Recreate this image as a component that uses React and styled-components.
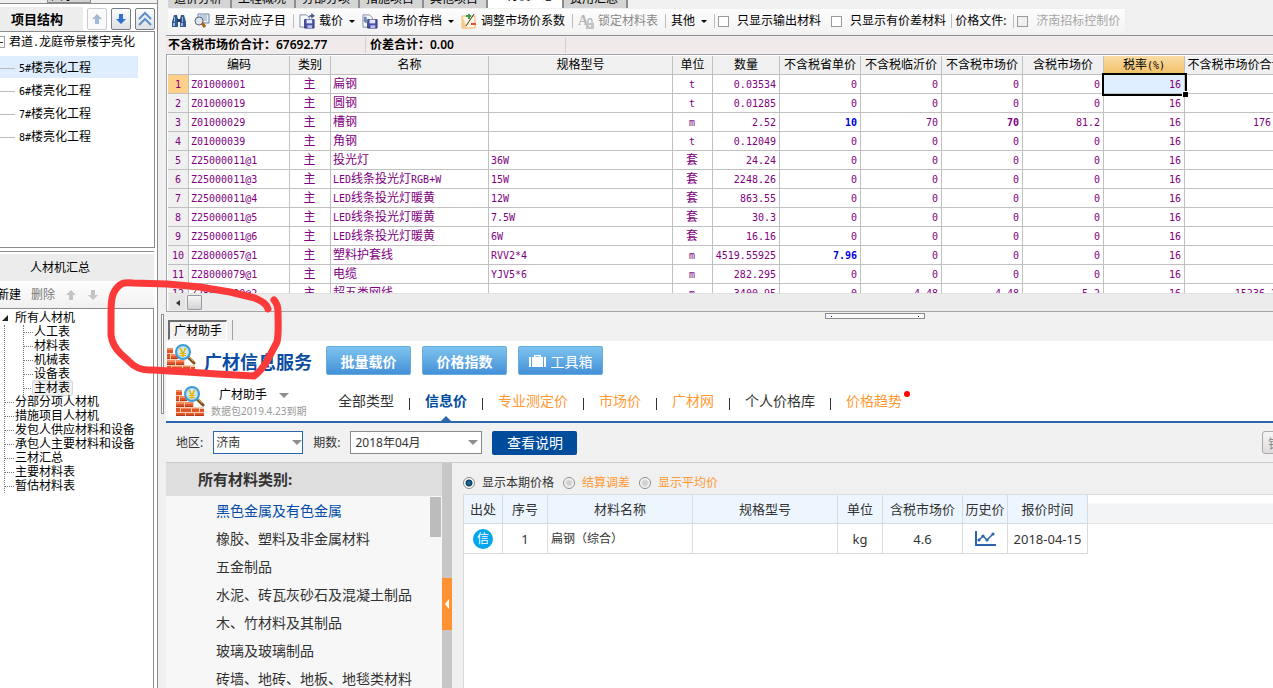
import React, { useState } from "react";
import styled, { createGlobalStyle, css } from "styled-components";

const GlobalStyle = createGlobalStyle`
  * {
    box-sizing: border-box;
  }
  html, body, #root {
    height: 100%;
  }
  body {
    margin: 0;
    overflow: hidden;
    background: #f0f0f0;
    color: #000;
    font-family: "Noto Sans", "Noto Sans CJK SC", sans-serif;
    font-size: 12px;
    line-height: 16px;
  }
  button, input, select {
    font-family: inherit;
    margin: 0;
  }
  ul {
    list-style: none;
    margin: 0;
    padding: 0;
  }
`;

const Page = styled.div`
  position: relative;
  display: flex;
  height: 100vh;
  overflow: hidden;
`;

/* half-width text inside the grid and the trees */
const Half = styled.span`
  font-family: "DejaVu Sans Mono", monospace;
  font-size: 10px;
  line-height: 10px;
`;

const Mixed = ({ text }) =>
  String(text)
    .split(/([\x20-\x7e]+)/)
    .filter(Boolean)
    .map((part, i) => (/^[\x20-\x7e]/.test(part) ? <Half key={i}>{part}</Half> : part));

/* ---------- left side ---------- */

const Sidebar = styled.aside`
  flex: none;
  width: 158px;
  display: flex;
  flex-direction: column;
  background: #fff;
  border-right: 1px solid #8c8c8c;
`;

const SideStrip = styled.div`
  flex: none;
  height: 4px;
  overflow: hidden;
  background: #f0f0f0;
  border-bottom: 1px solid #8c8c8c;
  padding-left: 47px;
`;

const SideTab = styled.div`
  width: 44px;
  height: 16px;
  margin-top: -13px;
  padding-left: 3px;
  background: #d2d2d2;
  border: 1px solid #8c8c8c;
  line-height: 16px;
`;

const StructureHead = styled.div`
  flex: none;
  display: flex;
  align-items: center;
  gap: 4px;
  height: 24px;
  margin-top: 3px;
  padding-right: 2px;
`;

const StructureTitle = styled.h2`
  flex: 1;
  margin: 0;
  padding-left: 11px;
  background: #ededed;
  font-size: 13px;
  line-height: 24px;
  font-weight: 700;
`;

const SquareButton = styled.button`
  display: flex;
  align-items: center;
  justify-content: center;
  width: 20px;
  height: 22px;
  padding: 0;
  border: 1px solid ${props => (props.$dim ? "#c9cdd2" : "#777d85")};
  border-radius: 2px;
  background: ${props => (props.$dim ? "#fafafa" : "linear-gradient(#fdfdfd, #dcdfe4)")};
`;

const ProjectTree = styled.ul`
  flex: none;
  height: 217px;
  margin-right: 2px;
  border: 1px solid #8c8c8c;
  border-left: 0;
`;

const ProjectRoot = styled.li`
  display: flex;
  align-items: center;
  gap: 4px;
  height: 20px;
  margin-bottom: 4px;
  white-space: nowrap;
`;

const Expander = styled.span`
  width: 5px;
  height: 12px;
  border: 1px solid #a0a0a0;
  border-left: 0;
  display: flex;
  align-items: center;

  &::before {
    content: "";
    width: 3px;
    height: 1px;
    background: #333;
  }
`;

const ProjectNode = styled.li`
  display: flex;
  align-items: center;
  gap: 4px;
  height: 22px;
  margin: 0 16px 1px 0;
  padding-top: 2px;
  background: ${props => (props.$active ? "#dfeeff" : "transparent")};

  &::before {
    content: "";
    width: 15px;
    height: 1px;
    background: #bbb;
  }
`;

const SummaryPane = styled.section`
  flex: 1;
  display: flex;
  flex-direction: column;
  min-height: 0;
  margin-top: 3px;
  margin-right: 3px;
  border-top: 1px solid #8c8c8c;
`;

const SummaryTitle = styled.h2`
  flex: none;
  margin: 2px 0 0;
  padding-left: 30px;
  background: #ececec;
  font-size: 12px;
  font-weight: 400;
  line-height: 27px;
`;

const SummaryTools = styled.div`
  flex: none;
  display: flex;
  align-items: center;
  gap: 10px;
  height: 27px;
  margin-left: -3px;
  background: linear-gradient(#fff, #f0f0f0);
`;

const PlainButton = styled.button`
  display: flex;
  padding: 0;
  border: 0;
  background: none;
  font-size: 12px;
  line-height: 16px;
  color: ${props => (props.disabled ? "#777" : "#000")};
`;

const MaterialTree = styled.div`
  flex: 1;
  overflow: hidden;
  padding: 2px 0 0 4px;
  border: 1px solid #8c8c8c;
  border-left: 0;
  border-bottom: 0;
  line-height: 14px;
  white-space: nowrap;
`;

const TreeRoot = styled.div`
  display: flex;
  align-items: center;
  gap: 7px;
  margin-left: -2px;
  height: 14px;
`;

const Branch = styled.ul`
  border-left: 1px dotted #777;
  ${props => props.$nested && css`
    margin-left: 18px;
  `}
`;

const Leaf = styled.li`
  display: flex;
  align-items: center;
  height: 14px;

  &::before {
    content: "";
    width: 9px;
    border-top: 1px dotted #777;
  }
`;

const LeafText = styled.span`
  padding: 0 2px 0 1px;
  border-radius: 2px;
  ${props => props.$active && css`
    background: #efefef;
    box-shadow: 0 0 0 1px #d9d9d9;
  `}
`;

const VerticalSplit = styled.div`
  flex: none;
  width: 8px;
  padding: 314px 2px 0 3px;
  background: #f0f0f0;
`;

const VerticalGrip = styled.div`
  height: 100px;
  border: 1px solid #8c8c8c;
  background: #fff;
`;

/* ---------- upper right: price grid ---------- */

const Main = styled.main`
  flex: 1;
  min-width: 0;
  display: flex;
  flex-direction: column;
`;

const TabStrip = styled.div`
  flex: none;
  display: flex;
  align-items: flex-end;
  height: 8px;
  overflow: hidden;
  padding-left: 2px;
`;

const Tab = styled.button`
  flex: none;
  height: 22px;
  padding: ${props => (props.$active ? "0 8px 2px 6px" : "4px 8px 0 6px")};
  border: 0;
  border-right: 2px solid #8c8c8c;
  background: ${props => (props.$active ? "#fff" : "#d4d4d4")};
  font-size: 12px;
  line-height: 16px;
`;

const Toolbar = styled.div`
  flex: none;
  height: 28px;
  padding: 1px 0 0 2px;
  border-bottom: 1px solid #8c8c8c;
`;

const ToolGroup = styled.div`
  display: flex;
  align-items: center;
  gap: 1px;
  height: 24px;
  width: max-content;
  padding-right: 4px;
  background: linear-gradient(#fdfdfd, #f3f3f3);
  white-space: nowrap;
`;

const ToolButton = styled.button`
  display: flex;
  align-items: center;
  gap: 4px;
  padding: 0 3px;
  border: 0;
  background: none;
  font-size: 12px;
  line-height: 16px;
  color: ${props => (props.disabled ? "#888" : "#000")};
`;

const Caret = styled.span`
  margin-left: 2px;
  border: 3px solid transparent;
  border-top-color: #000;
  border-bottom: 0;
`;

const ToolSep = styled.span`
  width: 1px;
  height: 14px;
  margin: 0 1px 0 3px;
  background: #bdbdbd;
`;

const ToolText = styled.span`
  padding: 0 3px 0 1px;
`;

const CheckLabel = styled.label`
  display: flex;
  align-items: center;
  gap: 8px;
  padding: 0 1px;
  color: ${props => (props.$dim ? "#a5a5a5" : "#000")};

  & + & {
    margin-left: 7px;
  }
`;

const CheckBox = styled.input`
  appearance: none;
  width: 11px;
  height: 11px;
  border: 1px solid #9a9a9a;
  background: ${props => (props.disabled ? "#f0f0f0" : "#fff")};

  &:checked {
    background: #6b8fc4;
  }
`;

const Totals = styled.div`
  flex: none;
  display: flex;
  height: 18px;
  padding: 1px 0;
  font-weight: 600;
`;

const Total = styled.div`
  width: 200px;
  padding-left: 4px;
  background: #f0ebea;
  border-right: 1px solid #d5d0cf;

  &:first-child {
    padding-left: 2px;
  }

  &:last-child {
    flex: 1;
    border: 0;
  }
`;

const GridFrame = styled.div`
  flex: none;
  padding: 1px 0 0 1px;
  border: 1px solid #a3a3a8;
  border-right: 0;
  background: #fff;
`;

const GridView = styled.div`
  height: 237px;
  overflow: hidden;
`;

const Sheet = styled.table`
  width: 1119px;
  table-layout: fixed;
  border-collapse: separate;
  border-spacing: 0;
  color: #800080;
`;

const HeadCell = styled.th`
  height: 19px;
  padding: 0;
  border-right: 1px solid #c0c0c0;
  border-bottom: 1px solid #c0c0c0;
  background: ${props => (props.$active ? "linear-gradient(#fbdca6, #f2bf66)" : "#f0f0f0")};
  color: #000;
  font-weight: 400;
  line-height: 16px;
  white-space: nowrap;
`;

const Cell = styled.td`
  height: 19px;
  padding: 0 3px 0 2px;
  border-right: 1px solid #c0c0c0;
  border-bottom: 1px solid #c0c0c0;
  line-height: 16px;
  text-align: ${props => props.$align || "left"};
  white-space: nowrap;
  color: ${props => (props.$edited ? "#0000e0" : "inherit")};
  font-weight: ${props => (props.$edited || props.$strong ? 700 : 400)};
  ${props => props.$selected && css`
    position: relative;
    background: #e0efff;
    outline: 2px solid #000;

    &::after {
      content: "";
      position: absolute;
      right: -4px;
      bottom: -4px;
      width: 5px;
      height: 5px;
      background: #000;
      border: 1px solid #fff;
      border-width: 1px 0 0 1px;
    }
  `}
`;

const RowHead = styled(Cell).attrs({ as: "th", scope: "row" })`
  padding: 0;
  text-align: center;
  background: ${props => (props.$active ? "#ffd08a" : "#f0f0f0")};
`;

const ScrollRow = styled.div`
  display: flex;
  gap: 2px;
  height: 18px;
  padding: 1px 2px;
  background: #ececec;
  border-top: 1px solid #e0e0e0;
`;

const ScrollArrow = styled.button`
  width: 15px;
  height: 15px;
  padding: 0;
  border: 0;
  background: #e4e4e4;
  display: flex;
  align-items: center;
  justify-content: center;

  &::before {
    content: "";
    border: 3px solid transparent;
    border-right: 4px solid #333;
    border-left: 0;
  }
`;

const ScrollThumb = styled.div`
  width: 15px;
  height: 15px;
  border: 1px solid #999;
  border-radius: 1px;
  background: linear-gradient(#f6f6f6, #d2d2d6);
`;

const SplitBar = styled.div`
  flex: none;
  height: 8px;
  padding: 1px 0 0 659px;
`;

const SplitGrip = styled.div`
  display: flex;
  align-items: center;
  justify-content: space-between;
  width: 100px;
  height: 6px;
  padding: 0 5px;
  border: 1px solid #8c8c8c;
  background: #fafafa;

  &::before,
  &::after {
    content: "";
    width: 1px;
    height: 1px;
    background: #00008b;
  }
`;

const DockTabs = styled.div`
  flex: none;
  display: flex;
  gap: 5px;
  height: 21px;
  padding: 0 0 1px 2px;
`;

const DockTab = styled.button`
  padding: 0 4px;
  border: 1px solid #fff;
  border-top: 2px solid #6d6d6d;
  border-left: 2px solid #6d6d6d;
  background: #f4f4f4;
  font-size: 12px;
  line-height: 16px;
`;

const DockSep = styled.span`
  width: 1px;
  background: #a0a0a0;
`;

/* ---------- lower right: price service ---------- */

const Service = styled.section`
  flex: 1;
  min-height: 0;
  display: flex;
  flex-direction: column;
  background: #fff;
  color: #333;
`;

const BrandRow = styled.header`
  flex: none;
  display: flex;
  align-items: flex-start;
  height: 38px;
  padding-top: 3px;
`;

const BrandName = styled.h1`
  margin: 6px 14px 0 8px;
  font-size: 18px;
  line-height: 24px;
  font-weight: 700;
  color: #0b4da2;
`;

const BlueButton = styled.button`
  display: flex;
  align-items: center;
  justify-content: center;
  gap: 5px;
  width: 85px;
  height: 29px;
  margin: 2px 11px 0 0;
  padding: 0;
  border: 1px solid #62aee0;
  border-radius: 2px;
  background: linear-gradient(#7ec3ee, #4590d8);
  color: #fff;
  font-size: 14px;
  font-weight: ${props => (props.$light ? 400 : 600)};
`;

const NavRow = styled.div`
  flex: none;
  display: flex;
  height: 44px;
  padding-left: 9px;
  border-bottom: 2px solid #2a66ab;
`;

const Account = styled.div`
  flex: none;
  display: flex;
  gap: 6px;
  width: 148px;
  padding-top: 7px;
  white-space: nowrap;
`;

const AccountName = styled.div`
  display: flex;
  align-items: center;
  gap: 12px;
  padding-left: 8px;
  line-height: 18px;
  color: #000;
`;

const AccountNote = styled.div`
  font-size: 10px;
  line-height: 14px;
  color: #999;
`;

const GreyCaret = styled.span`
  border: 5px solid transparent;
  border-top-color: #8e8e8e;
  border-bottom: 0;
`;

const Nav = styled.nav`
  display: flex;
  padding: 6px 0 0 15px;
  white-space: nowrap;
`;

const NavItem = styled.a`
  position: relative;
  display: flex;
  font-size: 14px;
  line-height: 32px;
  text-decoration: none;
  color: ${props => (props.$active ? "#004c9c" : props.$accent ? "#ff9933" : "#333")};
  font-weight: ${props => (props.$active ? 700 : 400)};

  &:not(:first-child)::before {
    content: "";
    width: 1px;
    height: 12px;
    margin: 13px 15px 0;
    background: #333;
  }
`;

const NavPointer = styled.span`
  position: absolute;
  right: 16px;
  bottom: 0;
  border: 5px solid transparent;
  border-bottom-color: #2a66ab;
  border-top: 0;
`;

const NavDot = styled.span`
  position: absolute;
  right: -8px;
  top: 6px;
  width: 6px;
  height: 6px;
  border-radius: 50%;
  background: #f00;
`;

const FilterRow = styled.div`
  flex: none;
  display: flex;
  align-items: center;
  height: 40px;
  padding-left: 10px;
  overflow: hidden;
  background: #f1f1f1;
  border-bottom: 1px solid #ccc;
`;

const Field = styled.label`
  display: flex;
  align-items: center;
  gap: 10px;
  margin-right: 10px;
  font-size: 12px;
`;

const SelectBox = styled.span`
  position: relative;
  display: flex;
  width: ${props => (props.$wide ? "132px" : "90px")};

  ${GreyCaret} {
    position: absolute;
    top: 9px;
    right: ${props => (props.$wide ? "4px" : "1px")};
    pointer-events: none;
  }
`;

const Select = styled.select`
  appearance: none;
  width: 100%;
  height: 23px;
  padding: 0 4px 0 ${props => (props.$wide ? "4px" : "2px")};
  border: 1px solid ${props => (props.$wide ? "#8a8a8a" : "#2a66ab")};
  border-radius: 0;
  background: #fff;
  font-size: 12px;
  color: #333;
`;

const ExplainButton = styled.button`
  width: 85px;
  height: 24px;
  padding: 0;
  border: 0;
  border-radius: 2px;
  background: #004c9c;
  color: #fff;
  font-size: 14px;
  line-height: 24px;
`;

const ReportButton = styled.button`
  flex: none;
  width: 64px;
  height: 23px;
  margin: 0 -53px 0 auto;
  padding: 0 4px;
  border: 1px solid #aaa;
  border-radius: 3px;
  background: linear-gradient(#f5f5f5, #ddd);
  color: #888;
  font-size: 13px;
`;

const Body = styled.div`
  flex: 1;
  min-height: 0;
  display: flex;
`;

const Categories = styled.aside`
  flex: none;
  width: 276px;
  display: flex;
  flex-direction: column;
  background: #f7f7f7;
`;

const CategoryTitle = styled.h2`
  flex: none;
  margin: 0;
  padding-left: 32px;
  background: #dedede;
  font-size: 15px;
  line-height: 33px;
  font-weight: 700;
`;

const CategoryScroll = styled.div`
  flex: 1;
  min-height: 0;
  display: flex;
  justify-content: space-between;
  overflow: hidden;
  padding: 1px 1px 0 50px;
`;

const CategoryLink = styled.a`
  display: block;
  font-size: 14px;
  line-height: 28px;
  text-decoration: none;
  color: ${props => (props.$active ? "#004ca8" : "#333")};
`;

const CategoryThumb = styled.div`
  width: 11px;
  height: 40px;
  background: #bcbcbc;
`;

const Divider = styled.div`
  flex: none;
  width: 10px;
  padding-top: 115px;
  background: #c8c7c5;
`;

const FoldButton = styled.button`
  display: flex;
  align-items: center;
  justify-content: center;
  width: 10px;
  height: 52px;
  padding: 0;
  border: 0;
  background: #ff9233;

  &::before {
    content: "";
    border: 5px solid transparent;
    border-right: 4px solid #fff;
    border-left: 0;
  }
`;

const Prices = styled.div`
  flex: 1;
  min-width: 0;
  display: flex;
  flex-direction: column;
  padding-left: 11px;
  background: #f0f0f0;
`;

const RadioRow = styled.div`
  flex: none;
  display: flex;
  align-items: center;
  gap: 9px;
  height: 31px;
  padding-top: 8px;
`;

const RadioLabel = styled.label`
  display: flex;
  align-items: center;
  gap: 7px;
  color: ${props => (props.$accent ? "#ff9933" : "#333")};
`;

const Radio = styled.input`
  appearance: none;
  width: 12px;
  height: 12px;
  border: 1px solid #8a8a8a;
  border-radius: 50%;
  background: radial-gradient(circle, #cfcfcf 0, #cfcfcf 2px, #fff 5px);

  &:checked {
    background: radial-gradient(circle, #1a7fb5 0, #0b3a5c 3px, #fff 4px);
  }
`;

const PriceView = styled.div`
  flex: 1;
  display: flex;
  align-items: flex-start;
  border-left: 1px solid #d8dcdf;
  background: #fff;
`;

const HeadFill = styled.div`
  flex: 1;
  height: 30px;
  border-top: 1px solid #d8dcdf;
  border-bottom: 1px solid #e3e3e3;
  background: linear-gradient(#fff 8px, #f3f4f5 9px);
`;

const PriceTable = styled.table`
  width: 624px;
  flex: none;
  table-layout: fixed;
  border-collapse: separate;
  border-spacing: 0;
  border-top: 1px solid #d8dcdf;
  font-size: 13px;

  th,
  td {
    height: 30px;
    padding: 0;
    border-right: 1px solid #d8dcdf;
    border-bottom: 1px solid #d8dcdf;
    text-align: center;
    white-space: nowrap;
  }

  th {
    height: 29px;
    background: #edf6ff;
    font-weight: 400;
  }

  svg {
    display: block;
    margin: 0 auto;
  }
`;

const NameCell = styled.td`
  && {
    padding-left: 3px;
    text-align: left;
    font-size: 12px;
  }
`;

const Source = styled.span`
  display: block;
  width: 20px;
  height: 20px;
  margin: 0 auto;
  border-radius: 50%;
  background: #00a5ef;
  color: #fff;
  font-size: 12px;
  line-height: 19px;
`;

const Marker = styled.svg`
  position: absolute;
  left: 100px;
  top: 275px;
  pointer-events: none;
`;

/* ---------- icons ---------- */

const ArrowIcon = ({ fill, down, size = 12 }) => (
  <svg width={size} height={size} viewBox="0 0 12 12" aria-hidden="true">
    <path
      d={down ? "M4 1h4v5h3L6 11 1 6h3z" : "M4 11h4V6h3L6 1 1 6h3z"}
      fill={fill}
    />
  </svg>
);

const DoubleUpIcon = () => (
  <svg width="16" height="16" viewBox="0 0 16 16" fill="none" aria-hidden="true">
    <path d="M2 8l6-6 6 6M2 14l6-6 6 6" stroke="#5c90cc" strokeWidth="2" />
  </svg>
);

const BinocularsIcon = () => (
  <svg width="16" height="16" viewBox="0 0 16 16" aria-hidden="true">
    <path d="M3 2h3l1 4v8H1V9z" fill="#35588f" />
    <path d="M10 2h3l2 7v5H9V6z" fill="#35588f" />
    <path d="M6 6h4v3H6z" fill="#1f3c6d" />
    <path d="M3 4h1v5H3zM11 4h1v5h-1zM2 10h2v3H2zM10 10h2v3h-2z" fill="#9ab8df" />
  </svg>
);

const LookupIcon = () => (
  <svg width="16" height="16" viewBox="0 0 16 16" aria-hidden="true">
    <path d="M4 1h11v9H4z" fill="#e6eef8" stroke="#6d84a5" />
    <path d="M6 3h7M6 5h7M9 7h4" stroke="#93a9c7" />
    <circle cx="5" cy="8" r="4" fill="#dbe7f0" stroke="#5b6470" />
    <path d="M8 10l3 4" stroke="#a8611f" strokeWidth="3" />
  </svg>
);

const DiskIcon = ({ out }) => (
  <svg width="16" height="16" viewBox="0 0 17 17" aria-hidden="true">
    <path d="M1 2h7l3 3v10H1z" fill="#f5f8fc" stroke="#7d8ba3" />
    <path d="M6 7h10v9H6z" fill="#4a50a8" stroke="#2f3580" />
    <path d="M8 7h6v4H8z" fill="#e4e8f6" />
    <path d="M9 13h5v3H9z" fill="#b9bfe2" />
    {out ? (
      <path d="M2 4h3v4h2L4 11 1 8h1z" fill="#7186b4" />
    ) : (
      <path d="M10 5c0-2 1-3 3-3V0l4 3-4 3V4c-1 0-2 0-3 1z" fill="#4d5d7d" />
    )}
  </svg>
);

const AdjustIcon = () => (
  <svg width="16" height="16" viewBox="0 0 16 16" aria-hidden="true">
    <path d="M1 3h13v12H1z" fill="#fff6e4" stroke="#efb06a" />
    <path d="M1 3v12h5z" fill="#f7c98b" />
    <path d="M5 3h5M8 1v5" stroke="#35a04c" strokeWidth="2" />
    <path d="M13 1L5 13" stroke="#333" />
    <path d="M10 11h5" stroke="#e5522f" strokeWidth="2" />
  </svg>
);

const LockIcon = () => (
  <svg width="16" height="16" viewBox="0 0 16 16" aria-hidden="true">
    <text x="0" y="12" fontSize="14" fontWeight="700" fontFamily="Liberation Serif, serif" fill="#b5b5b5">A</text>
    <path d="M10 10V8c0-3 4-3 4 0v2" fill="none" stroke="#bbb" strokeWidth="1.5" />
    <path d="M8 10h8v6H8z" fill="#c4c4c4" />
    <path d="M11 12h2v2h-2z" fill="#eee" />
  </svg>
);

const CaseIcon = () => (
  <svg width="17" height="14" viewBox="0 0 17 14" fill="#fff" aria-hidden="true">
    <path d="M5 3V1h7v2h-1.500V2.200h-4V3z" />
    <path d="M0 3h2v10H0zM3 3h11v10H3zM15 3h2v10h-2z" />
  </svg>
);

const LogoIcon = () => (
  <svg width="30" height="31" viewBox="0 0 30 31" aria-hidden="true">
    <path d="M1 5h6v5h4v6h8v5h10v9H1z" fill="#f6cdb0" />
    <g fill="#e0552a">
      <path d="M1 4h6v5H1zM1 10h3v5H1zM5 10h7v5H5zM1 16h8v5H1zM10 16h8v5h-8z" />
      <path d="M1 22h4v4H1zM6 22h10v4H6zM17 22h7v4h-7zM1 27h9v3H1zM11 27h8v3h-8zM20 27h9v3h-9zM25 23h4v3h-4z" />
    </g>
    <path d="M1 4h6v2H1zM5 10h7v2H5zM1 16h8v2H1zM10 16h8v2h-8zM6 22h10v1H6zM17 22h7v1h-7z" fill="#f58a5e" />
    <path d="M1 14h3v1H1zM5 14h7v1H5zM1 20h8v1H1zM10 20h8v1h-8zM1 29h9v1H1zM11 29h8v1h-8zM20 29h9v1h-9z" fill="#b23a16" />
    <path d="M22 13l6 6" stroke="#7b5420" strokeWidth="3" strokeLinecap="round" />
    <path d="M23 13l4 4" stroke="#e8a640" strokeLinecap="round" />
    <circle cx="17" cy="8" r="7" fill="#a9dcf5" stroke="#3f9bd4" strokeWidth="2" />
    <circle cx="17" cy="8" r="5" fill="#cfeaf5" />
    <text x="17" y="13" textAnchor="middle" fontSize="13" fontWeight="700" fontFamily="Liberation Sans, sans-serif" fill="#e6b800">¥</text>
  </svg>
);

const TrendIcon = () => (
  <svg width="21" height="16" viewBox="0 0 21 16" fill="none" stroke="#2a66ab" aria-hidden="true">
    <path d="M1 0v14h20" strokeWidth="2" />
    <path d="M4 9l4-4 4 4 6-6" strokeWidth="1.500" />
    <g fill="#2a66ab" stroke="none">
      <circle cx="4" cy="9" r="1.600" />
      <circle cx="8" cy="5" r="1.600" />
      <circle cx="12" cy="9" r="1.600" />
      <circle cx="18" cy="3" r="1.600" />
    </g>
  </svg>
);

const RootArrow = () => (
  <svg width="6" height="6" viewBox="0 0 6 6" aria-hidden="true">
    <path d="M6 0v6H0z" fill="#222" />
  </svg>
);

/* ---------- data ---------- */

const projects = ["5#楼亮化工程", "6#楼亮化工程", "7#楼亮化工程", "8#楼亮化工程"];
const materialKinds = ["人工表", "材料表", "机械表", "设备表", "主材表"];
const materialGroups = [
  "分部分项人材机",
  "措施项目人材机",
  "发包人供应材料和设备",
  "承包人主要材料和设备",
  "三材汇总",
  "主要材料表",
  "暂估材料表",
];

const tabs = ["造价分析", "工程概况", "分部分项", "措施项目", "其他项目", "人材机汇总", "费用汇总"];

const columns = [
  { title: "", width: 21 },
  { title: "编码", width: 101 },
  { title: "类别", width: 41, align: "center" },
  { title: "名称", width: 158 },
  { title: "规格型号", width: 184 },
  { title: "单位", width: 40, align: "center" },
  { title: "数量", width: 67, align: "right" },
  { title: "不含税省单价", width: 81, align: "right" },
  { title: "不含税临沂价", width: 81, align: "right" },
  { title: "不含税市场价", width: 81, align: "right" },
  { title: "含税市场价", width: 81, align: "right" },
  { title: "税率(%)", width: 81, align: "right" },
  { title: "不含税市场价合计", width: 102, align: "right" },
];

const rows = [
  ["Z01000001", "主", "扁钢", "", "t", "0.03534", "0", "0", "0", "0", "16", ""],
  ["Z01000019", "主", "圆钢", "", "t", "0.01285", "0", "0", "0", "0", "16", ""],
  ["Z01000029", "主", "槽钢", "", "m", "2.52", "10", "70", "70", "81.2", "16", "176.4"],
  ["Z01000039", "主", "角钢", "", "t", "0.12049", "0", "0", "0", "0", "16", ""],
  ["Z25000011@1", "主", "投光灯", "36W", "套", "24.24", "0", "0", "0", "0", "16", ""],
  ["Z25000011@3", "主", "LED线条投光灯RGB+W", "15W", "套", "2248.26", "0", "0", "0", "0", "16", ""],
  ["Z25000011@4", "主", "LED线条投光灯暖黄", "12W", "套", "863.55", "0", "0", "0", "0", "16", ""],
  ["Z25000011@5", "主", "LED线条投光灯暖黄", "7.5W", "套", "30.3", "0", "0", "0", "0", "16", ""],
  ["Z25000011@6", "主", "LED线条投光灯暖黄", "6W", "套", "16.16", "0", "0", "0", "0", "16", ""],
  ["Z28000057@1", "主", "塑料护套线", "RVV2*4", "m", "4519.55925", "7.96", "0", "0", "0", "16", ""],
  ["Z28000079@1", "主", "电缆", "YJV5*6", "m", "282.295", "0", "0", "0", "0", "16", ""],
  ["Z28000090@2", "主", "超五类网线", "", "m", "3400.95", "0", "4.48", "4.48", "5.2", "16", "15236.26"],
];

const navItems = [
  { text: "全部类型" },
  { text: "信息价", active: true },
  { text: "专业测定价", accent: true },
  { text: "市场价", accent: true },
  { text: "广材网", accent: true },
  { text: "个人价格库" },
  { text: "价格趋势", accent: true, dot: true },
];

const categories = [
  "黑色金属及有色金属",
  "橡胶、塑料及非金属材料",
  "五金制品",
  "水泥、砖瓦灰砂石及混凝土制品",
  "木、竹材料及其制品",
  "玻璃及玻璃制品",
  "砖墙、地砖、地板、地毯类材料",
];

const priceColumns = [
  ["出处", 39],
  ["序号", 45],
  ["材料名称", 145],
  ["规格型号", 145],
  ["单位", 45],
  ["含税市场价", 80],
  ["历史价", 45],
  ["报价时间", 80],
];

const priceModes = ["显示本期价格", "结算调差", "显示平均价"];

/* ---------- parts ---------- */

const LeftSide = () => (
  <Sidebar>
    <SideStrip>
      <SideTab>图示</SideTab>
    </SideStrip>
    <StructureHead>
      <StructureTitle>项目结构</StructureTitle>
      <SquareButton $dim aria-label="上移"><ArrowIcon fill="#a3b8d3" /></SquareButton>
      <SquareButton aria-label="下移"><ArrowIcon fill="#2f6fd0" down /></SquareButton>
      <SquareButton aria-label="收起"><DoubleUpIcon /></SquareButton>
    </StructureHead>
    <ProjectTree>
      <ProjectRoot>
        <Expander />
        <span><Mixed text="君道.龙庭帝景楼宇亮化" /></span>
      </ProjectRoot>
      {projects.map((name, i) => (
        <ProjectNode key={name} $active={i === 0}>
          <span><Mixed text={name} /></span>
        </ProjectNode>
      ))}
    </ProjectTree>
    <SummaryPane>
      <SummaryTitle>人材机汇总</SummaryTitle>
      <SummaryTools>
        <PlainButton>新建</PlainButton>
        <PlainButton disabled>删除</PlainButton>
        <PlainButton disabled aria-label="上移"><ArrowIcon fill="#c4c4c4" /></PlainButton>
        <PlainButton disabled aria-label="下移"><ArrowIcon fill="#c4c4c4" down /></PlainButton>
      </SummaryTools>
      <MaterialTree>
        <TreeRoot><RootArrow />所有人材机</TreeRoot>
        <Branch>
          <Branch as="li" $nested>
            <ul>
              {materialKinds.map(name => (
                <Leaf key={name}><LeafText $active={name === "主材表"}>{name}</LeafText></Leaf>
              ))}
            </ul>
          </Branch>
          {materialGroups.map(name => (
            <Leaf key={name}><LeafText>{name}</LeafText></Leaf>
          ))}
        </Branch>
      </MaterialTree>
    </SummaryPane>
  </Sidebar>
);

const GridToolbar = () => (
  <Toolbar>
    <ToolGroup>
      <ToolButton aria-label="查找"><BinocularsIcon /></ToolButton>
      <ToolButton><LookupIcon />显示对应子目</ToolButton>
      <ToolSep />
      <ToolButton><DiskIcon />载价<Caret /></ToolButton>
      <ToolButton><DiskIcon out />市场价存档<Caret /></ToolButton>
      <ToolButton><AdjustIcon />调整市场价系数</ToolButton>
      <ToolSep />
      <ToolButton disabled><LockIcon />锁定材料表</ToolButton>
      <ToolSep />
      <ToolButton>其他<Caret /></ToolButton>
      <ToolSep />
      <CheckLabel><CheckBox type="checkbox" />只显示输出材料</CheckLabel>
      <CheckLabel><CheckBox type="checkbox" />只显示有价差材料</CheckLabel>
      <ToolSep />
      <ToolText>价格文件:</ToolText>
      <ToolSep />
      <CheckLabel $dim><CheckBox type="checkbox" disabled />济南招标控制价</CheckLabel>
    </ToolGroup>
  </Toolbar>
);

const PriceGrid = () => (
  <GridFrame>
    <GridView>
      <Sheet>
        <colgroup>
          {columns.map(col => <col key={col.title} style={{ width: col.width }} />)}
        </colgroup>
        <thead>
          <tr>
            {columns.map((col, i) => (
              <HeadCell key={col.title} $active={i === 11}><Mixed text={col.title} /></HeadCell>
            ))}
          </tr>
        </thead>
        <tbody>
          {rows.map((row, r) => (
            <tr key={row[0]}>
              <RowHead $active={r === 0}><Half>{r + 1}</Half></RowHead>
              {row.map((value, c) => (
                <Cell
                  key={c}
                  $align={columns[c + 1].align}
                  $edited={c === 6 && value !== "0"}
                  $strong={c === 8 && value === "70"}
                  $selected={r === 0 && c === 10}
                >
                  <Mixed text={value} />
                </Cell>
              ))}
            </tr>
          ))}
        </tbody>
      </Sheet>
    </GridView>
    <ScrollRow>
      <ScrollArrow aria-label="向左滚动" />
      <ScrollThumb />
    </ScrollRow>
  </GridFrame>
);

const PriceService = () => {
  const [mode, setMode] = useState(priceModes[0]);

  return (
    <Service>
      <BrandRow>
        <LogoIcon />
        <BrandName>广材信息服务</BrandName>
        <BlueButton>批量载价</BlueButton>
        <BlueButton>价格指数</BlueButton>
        <BlueButton $light><CaseIcon />工具箱</BlueButton>
      </BrandRow>
      <NavRow>
        <Account>
          <LogoIcon />
          <div>
            <AccountName>广材助手<GreyCaret /></AccountName>
            <AccountNote>数据包2019.4.23到期</AccountNote>
          </div>
        </Account>
        <Nav>
          {navItems.map(item => (
            <NavItem key={item.text} href="#" $active={item.active} $accent={item.accent}>
              {item.text}
              {item.active ? <NavPointer /> : null}
              {item.dot ? <NavDot /> : null}
            </NavItem>
          ))}
        </Nav>
      </NavRow>
      <FilterRow>
        <Field>
          地区:
          <SelectBox>
            <Select defaultValue="济南"><option>济南</option></Select>
            <GreyCaret />
          </SelectBox>
        </Field>
        <Field>
          期数:
          <SelectBox $wide>
            <Select $wide defaultValue="2018年04月"><option>2018年04月</option></Select>
            <GreyCaret />
          </SelectBox>
        </Field>
        <ExplainButton>查看说明</ExplainButton>
        <ReportButton>错误反馈</ReportButton>
      </FilterRow>
      <Body>
        <Categories>
          <CategoryTitle>所有材料类别:</CategoryTitle>
          <CategoryScroll>
            <ul>
              {categories.map((name, i) => (
                <li key={name}><CategoryLink href="#" $active={i === 0}>{name}</CategoryLink></li>
              ))}
            </ul>
            <CategoryThumb />
          </CategoryScroll>
        </Categories>
        <Divider><FoldButton aria-label="收起分类" /></Divider>
        <Prices>
          <RadioRow>
            {priceModes.map((name, i) => (
              <RadioLabel key={name} $accent={i > 0}>
                <Radio type="radio" name="mode" checked={mode === name} onChange={() => setMode(name)} />
                {name}
              </RadioLabel>
            ))}
          </RadioRow>
          <PriceView>
            <PriceTable>
              <colgroup>
                {priceColumns.map(([title, width]) => <col key={title} style={{ width }} />)}
              </colgroup>
              <thead>
                <tr>{priceColumns.map(([title]) => <th key={title}>{title}</th>)}</tr>
              </thead>
              <tbody>
                <tr>
                  <td><Source>信</Source></td>
                  <td>1</td>
                  <NameCell>扁钢（综合）</NameCell>
                  <td />
                  <td>kg</td>
                  <td>4.6</td>
                  <td><TrendIcon /></td>
                  <td>2018-04-15</td>
                </tr>
              </tbody>
            </PriceTable>
            <HeadFill />
          </PriceView>
        </Prices>
      </Body>
    </Service>
  );
};

const App = () => (
  <Page>
    <GlobalStyle />
    <LeftSide />
    <VerticalSplit><VerticalGrip /></VerticalSplit>
    <Main>
      <TabStrip>
        {tabs.map(name => <Tab key={name} $active={name === "人材机汇总"}>{name}</Tab>)}
      </TabStrip>
      <GridToolbar />
      <Totals>
        <Total>不含税市场价合计：67692.77</Total>
        <Total>价差合计：0.00</Total>
        <Total />
      </Totals>
      <PriceGrid />
      <SplitBar><SplitGrip /></SplitBar>
      <DockTabs>
        <DockTab>广材助手</DockTab>
        <DockSep />
      </DockTabs>
      <PriceService />
    </Main>
    {/* hand-drawn circle round the helper tab */}
    <Marker width="190" height="110" viewBox="0 0 190 110" fill="none" aria-hidden="true">
      <path
        d="M168 34C166 27 160 26 155 23L130 17L100 12L67 9L33 8C22 7 20 9 16 14C11 20 11 30 11 43V60C12 68 16 74 20 78L33 90C40 95 46 95 53 95L87 97L117 99L154 101C160 97 164 91 167 86L177 67C179 58 178 47 178 37C178 32 177 28 174 25"
        stroke="#fd3a3a"
        strokeWidth="7"
        strokeLinecap="round"
        strokeLinejoin="round"
      />
    </Marker>
  </Page>
);

export default App;
